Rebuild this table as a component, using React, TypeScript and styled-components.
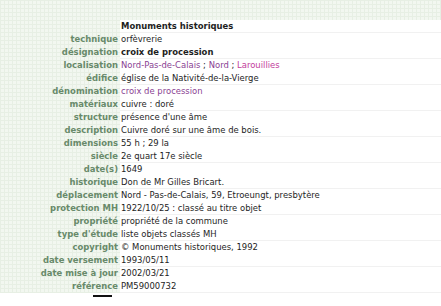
import React from "react";
import styled, { createGlobalStyle } from "styled-components";

const GlobalStyle = createGlobalStyle`
  html, body { margin: 0; padding: 0; background: #ffffff; }
  body { font-family: "DejaVu Sans", Verdana, sans-serif; font-size: 8.45px; color: #1e1e1e; }
`;

const grid = `
  background-color: #f2f7f0;
  background-image:
    linear-gradient(to right, #e7efe4 1px, transparent 1px),
    linear-gradient(to bottom, #e7efe4 1px, transparent 1px);
  background-size: 4px 4px;
  background-attachment: fixed;
`;

const Page = styled.div`
  width: 441px;
  display: flex;
  flex-direction: column;
`;

const TopBand = styled.div`
  height: 20px;
  ${grid}
`;

const Table = styled.div`
  display: grid;
  grid-template-columns: 120px 1fr;
`;

const Label = styled.div`
  ${grid}
  height: 13px;
  line-height: 13px;
  text-align: right;
  padding-right: 2px;
  font-weight: bold;
  color: #688a6a;
  white-space: nowrap;
`;

const Value = styled.div<{ $ruled?: boolean; $bold?: boolean }>`
  height: 13px;
  line-height: 13px;
  padding-left: 1px;
  white-space: nowrap;
  overflow: hidden;
  font-weight: ${(p) => (p.$bold ? "bold" : "normal")};
  color: #1e1e1e;
  background: ${(p) =>
    p.$ruled
      ? "linear-gradient(to top, #f1f1f1 0, #f1f1f1 1px, #ffffff 1px)"
      : "#ffffff"};
`;

const Link = styled.span<{ $pink?: boolean }>`
  color: ${(p) => (p.$pink ? "#c23d9b" : "#8a3f93")};
`;

const Footer = styled.div`
  height: 12px;
  padding-top: 2px;
  padding-left: 93px;
  background: #ffffff;
`;

const Mark = styled.div`
  width: 19px;
  height: 2px;
  background: #111111;
`;

type Row = { label: string; value: React.ReactNode; bold?: boolean };

const rows: Row[] = [
  { label: "", value: "Monuments historiques", bold: true },
  { label: "technique", value: "orfèvrerie" },
  { label: "désignation", value: "croix de procession", bold: true },
  {
    label: "localisation",
    value: (
      <>
        <Link>Nord-Pas-de-Calais</Link> ; <Link>Nord</Link> ; <Link $pink>Larouillies</Link>
      </>
    ),
  },
  { label: "édifice", value: "église de la Nativité-de-la-Vierge" },
  { label: "dénomination", value: <Link>croix de procession</Link> },
  { label: "matériaux", value: "cuivre : doré" },
  { label: "structure", value: "présence d'une âme" },
  { label: "description", value: "Cuivre doré sur une âme de bois." },
  { label: "dimensions", value: "55 h ; 29 la" },
  { label: "siècle", value: "2e quart 17e siècle" },
  { label: "date(s)", value: "1649" },
  { label: "historique", value: "Don de Mr Gilles Bricart." },
  { label: "déplacement", value: "Nord - Pas-de-Calais, 59, Etroeungt, presbytère" },
  { label: "protection MH", value: "1922/10/25 : classé au titre objet" },
  { label: "propriété", value: "propriété de la commune" },
  { label: "type d'étude", value: "liste objets classés MH" },
  { label: "copyright", value: "© Monuments historiques, 1992" },
  { label: "date versement", value: "1993/05/11" },
  { label: "date mise à jour", value: "2002/03/21" },
  { label: "référence", value: "PM59000732" },
];

export default function App() {
  return (
    <Page>
      <GlobalStyle />
      <TopBand />
      <Table>
        {rows.map((r, i) => (
          <React.Fragment key={i}>
            <Label>{r.label}</Label>
            <Value $ruled={i % 2 === 0} $bold={r.bold}>
              {r.value}
            </Value>
          </React.Fragment>
        ))}
      </Table>
      <Footer>
        <Mark />
      </Footer>
    </Page>
  );
}
